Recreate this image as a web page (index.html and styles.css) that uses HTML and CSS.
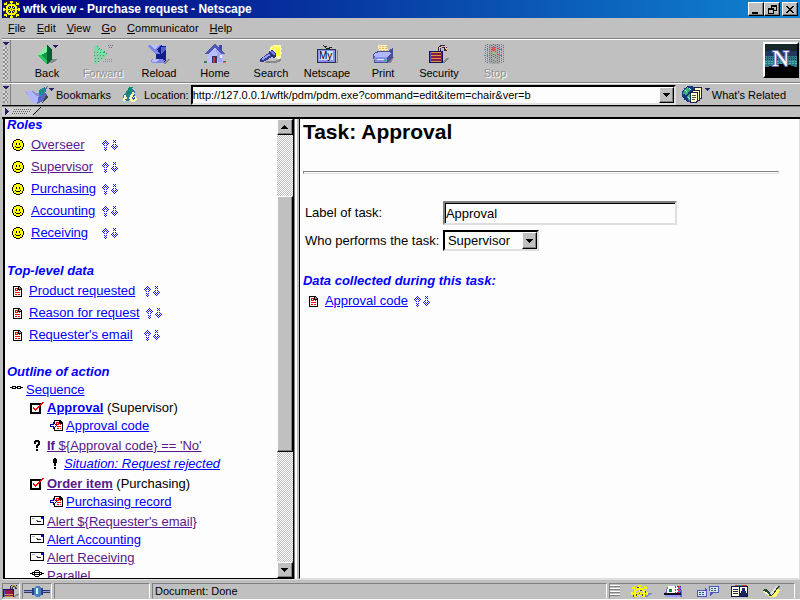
FILE: index.html
```html
<!DOCTYPE html>
<html lang="en">
<head>
<meta charset="utf-8">
<title>wftk view - Purchase request - Netscape</title>
<link rel="stylesheet" href="styles.css">
</head>
<body>
<svg class="defs" aria-hidden="true">
  <symbol id="wheel" viewBox="0 0 17 17">
    <path d="M5 3h7v1h1v1h1v7h-1v1h-1v1H5v-1H4v-1H3V5h1V4h1zM6 5v1H5v5h1v1h5v-1h1V6h-1V5z" fill="#ff0" fill-rule="evenodd"/>
    <path d="M8 0h1v17H8zM0 8h17v1H0z" fill="#ff0"/>
    <path d="M7 0h3v2H7zM7 15h3v2H7zM0 7h2v3H0zM15 7h2v3h-2zM1 2h2V1h1v3H1zM13 1h1v1h2v2h-3zM1 13h3v3H3v-1H1zM13 13h3v2h-2v1h-1z" fill="#ff0"/>
    <path d="M4 4h1v1H4zM12 4h1v1h-1zM4 12h1v1H4zM12 12h1v1h-1zM6 6h1v1H6zM10 6h1v1h-1zM6 10h1v1H6zM10 10h1v1h-1zM7 7h3v3H7z" fill="#ee0"/>
    <path d="M8 8h1v1H8zM6 2h2v1H6zM10 14h2v1h-2zM14 6h1v2h-1zM2 10h1v2H2zM9 5h2v1H9zM5 9h1v2H5zM11 9h1v2h-1z" fill="#442"/>
  </symbol>
  <symbol id="smile" viewBox="0 0 12 12">
    <path d="M4 0h4v1h2v1h1v2h1v4h-1v2h-1v1H8v1H4v-1H2v-1H1V8H0V4h1V2h1V1h2z" fill="#000"/>
    <path d="M4 1h4v1h2v2h1v4h-1v2H8v1H4v-1H2V8H1V4h1V2h2z" fill="#ff0"/>
    <path d="M4 4h1v2H4zM7 4h1v2H7zM3 7h1v1h4V7h1v1H8v1H4V8H3z" fill="#000"/>
  </symbol>
  <symbol id="arrows" viewBox="0 0 16 11">
    <path d="M3 .5h1M2 1.500h1m1 0h1M1 2.500h1m1 0h1m1 0h1M0 3.500h1m1 0h1m1 0h1m1 0h1M1 4.500h1m3 0h1M2 5.500h1m1 0h1M2 7.500h1m1 0h1M2 9.500h1m1 0h1M3 8.500h1m-1 2h1M11 .5h1m1 0h1M12 1.500h1M11 2.500h1m1 0h1M11 4.500h1m1 0h1M10 5.500h1m3 0h1M9 6.500h1m1 0h1m1 0h1m1 0h1M10 7.500h1m1 0h1m1 0h1M11 8.500h1m1 0h1M12 9.500h1" stroke="#1818e8"/>
  </symbol>
  <symbol id="page" viewBox="0 0 9 11">
    <path d="M0 0h6l3 3v8H0z" fill="#000"/><path d="M1 1h4v3h3v6H1z" fill="#fff"/>
    <path d="M6 1h1v1h1v1H6z" fill="#999"/>
    <path d="M2 2h3v3H2zM6 4h1v1H6zM2 6h5v1H2zM2 8h2v1H2zM5 8h2v1H5z" fill="#f00"/><path d="M3 3h1v1H3z" fill="#fff"/>
  </symbol>
  <symbol id="pagein" viewBox="0 0 13 11">
    <path d="M4 0h6l3 3v8H4z" fill="#000"/><path d="M5 1h4v3h3v6H5z" fill="#fff"/>
    <path d="M6 2h3v3H6zM10 4h1v1h-1zM7 6h4v1H7zM7 8h2v1H7zM10 8h1v1h-1z" fill="#f00"/><path d="M7 3h1v1H7z" fill="#fff"/>
    <path d="M0 4h3V2h1v1h1v1h1v1h1v1H6v1H5v1H4v1H3V7H0z" fill="#00a"/><path d="M1 5h3V4h1v1h1v1H5v1H4V6H1z" fill="#fff"/>
  </symbol>
  <symbol id="chain" viewBox="0 0 13 4">
    <path d="M0 1h2V0h4v1h1V0h4v1h2v1h-2v1H7V2H6v1H2V2H0z" fill="#000"/><path d="M3 1h2v1H3zM8 1h2v1H8z" fill="#fff"/>
  </symbol>
  <symbol id="task" viewBox="0 0 14 12">
    <path d="M0 1h11v11H0z" fill="#000"/><path d="M2 3h7v7H2z" fill="#fff"/>
    <path d="M3 5h1v1h1v1h1v1-2h1V5h1V4h1V3h1V2h1V1h1V0h2v1h-1v1h-1v1h-1v1h-1v1H9v1H8v1H7v1H6v1H5V8H4V7H3z" fill="#f00"/>
  </symbol>
  <symbol id="question" viewBox="0 0 7 12">
    <path d="M1 0h4v1h1v4H5v1H4v2H2V5h1V4h1V2H2v2H0V1h1zM2 9h2v2H2z" fill="#000"/>
  </symbol>
  <symbol id="bang" viewBox="0 0 4 12">
    <path d="M1 0h2v1h1v4H3v3H1V5H0V1h1zM1 9h2v2H1z" fill="#000"/>
  </symbol>
  <symbol id="mail" viewBox="0 0 14 9">
    <path d="M0 0h14v9H0z" fill="#000"/><path d="M1 1h12v7H1z" fill="#fff"/>
    <path d="M2 2h3v1H2z" fill="#aaa"/><path d="M11 1h2v2h-2z" fill="#00f"/><path d="M6 4h2v1H6z" fill="#888"/><path d="M7 5h4v1H7z" fill="#222"/>
  </symbol>
  <symbol id="parallel" viewBox="0 0 14 7">
    <path d="M0 3h2V2h2V1h1V0h4v1h1v1h2v1h2v1h-2v1h-2v1H9v1H5V6H4V5H2V4H0z" fill="#000"/><path d="M5 1h4v1H5zM3 3h1v1H3zM5 3h4v1H5zM10 3h1v1h-1zM5 5h4v1H5z" fill="#fff"/>
  </symbol>
  <symbol id="drop" viewBox="0 0 7 4"><path d="M0 0h7v1H6v1H5v1H4v1H3V3H2V2H1V1H0z"/></symbol>
  <symbol id="rise" viewBox="0 0 7 4"><path d="M0 4h7V3H6V2H5V1H4V0H3v1H2v1H1v1H0z"/></symbol>
  <symbol id="openlock" viewBox="0 0 20 20">
    <path d="M13 18l5-4h2v1l-5 4h-2z" fill="#888"/>
    <path d="M0 7h14v12H0z" fill="#181060"/><path d="M1 8h12v10H1z" fill="#901848"/>
    <path d="M2 8h10v1H2zM2 11h10v1H2zM2 14h10v1H2zM2 17h10v1H2z" fill="#c8a040"/>
    <path d="M1 8h1v10H1z" fill="#5058c0"/>
    <path d="M9 7V3h1V2h1V1h5v1h1v1h1v4h-3V4h-3v3z" fill="#302848"/><path d="M10 7V3h2V2h4v2h1v2" fill="none" stroke="#edc870"/>
  </symbol>
  <symbol id="grip" viewBox="0 0 6 4"><path d="M0 0h6v1H5v1H4v1H2V2H1V1H0z" fill="#226"/></symbol>
</svg>

<header class="titlebar">
  <svg class="emblem"><use href="#wheel"/></svg>
  <h1>wftk view - Purchase request - Netscape</h1>
  <div class="winbtns">
    <button class="raised" aria-label="Minimize"><svg width="9" height="9"><path d="M0 7h6v2H0z"/></svg></button>
    <button class="raised" aria-label="Restore"><svg width="9" height="9"><path d="M3 0h6v6H6V5h2V2H4v1H3zM0 3h6v6H0zM1 5v3h4V5z" fill-rule="evenodd"/></svg></button>
    <button class="raised close" aria-label="Close"><svg width="9" height="9"><path d="M0 1h2v1h1v1h2V2h1V1h2v1H7v1H6v1H5v1h1v1h1v1h1v1H6V7H5V6H3v1H2v1H0V7h1V6h1V5h1V4H2V3H1V2H0z"/></svg></button>
  </div>
</header>

<nav class="menubar">
  <button><u>F</u>ile</button><button><u>E</u>dit</button><button><u>V</u>iew</button><button><u>G</u>o</button><button><u>C</u>ommunicator</button><button><u>H</u>elp</button>
</nav>

<div class="toolbar">
  <span class="handle"><svg width="6" height="4"><use href="#grip"/></svg></span>
  <div class="tools">
    <button><svg width="24" height="20"><path d="M10 17l7-2h5l-2 3-8 2z" fill="#888"/><path d="M2 11L12 1v19z" fill="#28c860"/><path d="M2 11L12 1v9z" fill="#80f0a0"/><path d="M12 1l5 5v9l-5 5z" fill="#006030"/><path d="M6 11l6-3v8z" fill="#109848"/><use href="#grip" x="18" y="1" width="5" height="4"/></svg>Back</button>
    <button disabled><svg width="24" height="20"><path d="M3 3l2-2 12 10-12 9H3z" fill="#90d0a8"/><path d="M5 1l12 10H8z" fill="#68e8a0"/><path d="M6 2l11 9M3 8h10M3 11h12M4 14h9M4 17h5M7 5h4" stroke="#50907b" stroke-dasharray="1 2"/><path d="M12 17h9M14 15h8" stroke="#888" stroke-dasharray="1 1"/><path d="M17 1h5M18 3h3" stroke="#668" stroke-dasharray="1 1"/></svg>Forward</button>
    <button><svg width="24" height="20"><path d="M14 18l8-3 1 1-5 4z" fill="#888"/><path d="M10 1l9 1v15l-5 2H9z" fill="#101c90"/><path d="M2 1h12l-4 4 3 5H8L1 3z" fill="#7a84e4"/><path d="M3 1h10L8 5z" fill="#b8c0ff"/><path d="M5 15h8l5 1-3 3H5l-1-2z" fill="#8088e8"/><path d="M6 15h6l-2 3H5z" fill="#b8c0ff"/><path d="M14 3h5v2l-5 6z" fill="#5660d0"/></svg>Reload</button>
    <button><svg width="24" height="20"><path d="M1 19h22v-2H1z" fill="#388060"/><path d="M17 18h6v1h-6z" fill="#e64"/><path d="M4 9l8-8 8 8v10H4z" fill="#b8c0ff"/><path d="M1 10L12 0l10 10h-3l-7-6-7 6z" fill="#5058b8"/><path d="M16 1h3v7l-3-3z" fill="#4048a8"/><path d="M13 5l6 5v8h-4z" fill="#a0a8f0"/><path d="M9 12h5v7H9z" fill="#336"/><path d="M10 13h2v6h-2z" fill="#b23c50"/><path d="M17 11h2v3h-2z" fill="#eef"/></svg>Home</button>
    <button><svg width="24" height="20"><path d="M12 2l3-1h7v13l-2 1-8-2-2-5z" fill="#ffffa0"/><path d="M14 3h7M13 5h10M13 7h9M13 9h10M16 11h6" stroke="#ff3" stroke-width="2" stroke-dasharray="2 1"/><path d="M7 17h8l7-2v2l-6 2H6z" fill="#888"/><path d="M1 15l10-7 4 4-11 6H1z" fill="#303890"/><path d="M2 15l9-6 2 1-9 6z" fill="#929df4"/><path d="M10 7l3-1 4 3v3l-2 2-5-4z" fill="#283080"/><path d="M11 7h2l3 3v1h-2z" fill="#7880e0"/></svg>Search</button>
    <button><svg width="24" height="20"><path d="M4 18h18V6h1v13H5z" fill="#888"/><path d="M2 5h19v14H2z" fill="#235"/><path d="M3 6h17v12H3z" fill="#8890e8"/><path d="M4 7h14v9H4z" fill="#d9ddff"/><path d="M8 1l4 4 5-2M9 2h3" stroke="#222" fill="none"/><text x="4" y="15" class="my">My</text></svg>Netscape</button>
    <button><svg width="24" height="20"><path d="M10 18l10-5h3l-3 6z" fill="#888"/><path d="M7 1h9l1 8H8z" fill="#fff3bd"/><path d="M8 2h8M8 4h8M9 6h8" stroke="#eab964" stroke-dasharray="2 1"/><path d="M2 10l5-3h10l5-3v9l-6 6H3z" fill="#485098"/><path d="M3 10l5-2h9l3 1-4 4H4z" fill="#b1b8ff"/><path d="M3 13h13v5H4z" fill="#8890e0"/><path d="M6 15h7v1H6z" fill="#dfe2ff"/><path d="M13 16h2v1h-2z" fill="#0c4"/></svg>Print</button>
    <button><svg width="24" height="20"><use href="#openlock" x="2" width="20" height="20"/></svg>Security</button>
    <button disabled><svg width="24" height="20"><path d="M6 0h11v20H6z" fill="#aaa"/><path d="M2 1v18M4 0v20M6 1v18M16 1v18M18 0v20M20 1v18M8 1v18M10 0v20M12 1v18M14 0v20" stroke="#668" stroke-dasharray="1 1"/><path d="M1 5h4M1 11h4M17 5h4M17 11h4" stroke="#58c" stroke-dasharray="2 1"/><path d="M9 3h3v4H9z" fill="#d55"/><path d="M10 9h3M10 15h3" stroke="#9b8" stroke-width="2"/><path d="M15 4h1M15 10h1" stroke="#d44"/></svg>Stop</button>
  </div>
  <a class="logo" href="#" aria-label="Netscape"><svg width="32" height="32"><path d="M0 0h32v32H0z" fill="#182828"/><path d="M0 7h32v6H0z" fill="#20385c"/><path d="M0 12h32v12H0z" fill="#307888"/><path d="M0 9h32M0 11h32M0 13h32M0 15h32" stroke="#203c58" stroke-dasharray="1 1"/><path d="M0 17h32M0 19h32" stroke="#55b2b4" stroke-dasharray="2 1"/><path d="M0 32V23h4v-1h4v-1h5v-1h8v1h5v1h3v1h3v9z" fill="#000"/><text x="7" y="22" class="bign">N</text></svg></a>
</div>

<form class="location">
  <span class="handle"><svg width="6" height="4"><use href="#grip"/></svg></span>
  <button type="button" class="flatbtn bookmarks"><svg width="30" height="18"><path d="M1 5h7l2 2h5v10H8L2 8z" fill="#888eda"/><path d="M1 5l6 12h8l5-6-9-1-5-5z" fill="#afb6ff"/><path d="M15 5l8-5-3 7 2 1-4 7-6 3z" fill="#5864c8"/><path d="M14 4l6-3v4l-5 5z" fill="#199080"/><path d="M21 9l2 2-6 6z" fill="#444"/><use href="#grip" x="24" y="2" width="5" height="4"/></svg>Bookmarks</button>
  <span class="drag"><svg width="16" height="16"><path d="M1 9l6-8 4 1 2 3-6 9H1z" fill="#257e91"/><path d="M7 0h4l-5 8H4z" fill="#078a79"/><path d="M1 12l2-5 2 4-1 3H1zM7 11l4-7 4 8-2 3H9z" fill="#ffffb0"/><path d="M3 12h2M10 12l3-5M11 13l2-3" stroke="#3455b8"/></svg></span>
  <label for="url">Location:</label>
  <div class="sunken combo"><input id="url" value="http://127.0.0.1/wftk/pdm/pdm.exe?command=edit&amp;item=chair&amp;ver=b"><button type="button" class="raised" aria-label="Show addresses"><svg width="7" height="4"><use href="#drop"/></svg></button></div>
  <button type="button" class="flatbtn related"><svg width="28" height="18"><circle cx="8" cy="8" r="8" fill="#173880"/><path d="M2 4l4-3 2 3-3 5-4-1zM7 8l3-1v6l-3 2-2-4z" fill="#35ae82"/><path d="M3 4l2 2M6 11l2 2M7 2l2 2" stroke="#9ff"/><path d="M12 1h8v12h-8z" fill="#224"/><path d="M13 2h6v10h-6z" fill="#ffffc8"/><path d="M10 4h8v11h-8z" fill="#224"/><path d="M11 5h6v9h-6z" fill="#ffffc8"/><path d="M8 6h8v9l-2 2H8z" fill="#224"/><path d="M9 7h6v7l-2 2H9z" fill="#ffffc8"/><path d="M10 9.500h4M10 11.500h4M10 13.500h3" stroke="#555"/><use href="#grip" x="23" y="2" width="5" height="4"/></svg>What's Related</button>
</form>

<div class="shelf"><svg width="40" height="9"><path d="M0 0h38l-9 9H0z" fill="#d0d0d0"/><path d="M39 0l-8 8" stroke="#000"/><path d="M3 1l4 3-4 4z" fill="#226"/><path d="M12 2.500h18M11 4.500h17M10 6.500h16" stroke="#666" stroke-dasharray="1 1"/></svg></div>

<main class="frames">
  <section class="frame outline">
    <div class="scroller">
      <div class="content">
        <h2>Roles</h2>
        <ul class="items roles">
          <li><svg class="icon" width="12" height="12"><use href="#smile"/></svg><a class="seen" href="#">Overseer</a><svg class="move" width="16" height="11"><use href="#arrows"/></svg></li>
          <li><svg class="icon" width="12" height="12"><use href="#smile"/></svg><a class="seen" href="#">Supervisor</a><svg class="move" width="16" height="11"><use href="#arrows"/></svg></li>
          <li><svg class="icon" width="12" height="12"><use href="#smile"/></svg><a href="#">Purchasing</a><svg class="move" width="16" height="11"><use href="#arrows"/></svg></li>
          <li><svg class="icon" width="12" height="12"><use href="#smile"/></svg><a href="#">Accounting</a><svg class="move" width="16" height="11"><use href="#arrows"/></svg></li>
          <li><svg class="icon" width="12" height="12"><use href="#smile"/></svg><a href="#">Receiving</a><svg class="move" width="16" height="11"><use href="#arrows"/></svg></li>
        </ul>
        <h2>Top-level data</h2>
        <ul class="items data">
          <li><svg class="icon" width="9" height="11"><use href="#page"/></svg><a href="#">Product requested</a><svg class="move" width="16" height="11"><use href="#arrows"/></svg></li>
          <li><svg class="icon" width="9" height="11"><use href="#page"/></svg><a href="#">Reason for request</a><svg class="move" width="16" height="11"><use href="#arrows"/></svg></li>
          <li><svg class="icon" width="9" height="11"><use href="#page"/></svg><a href="#">Requester's email</a><svg class="move" width="16" height="11"><use href="#arrows"/></svg></li>
        </ul>
        <h2>Outline of action</h2>
        <div class="tree">
          <p class="l0"><svg width="13" height="4"><use href="#chain"/></svg><a href="#">Sequence</a></p>
          <p class="l1"><svg width="14" height="12"><use href="#task"/></svg><span><a href="#"><b>Approval</b></a> (Supervisor)</span></p>
          <p class="l2"><svg width="13" height="11"><use href="#pagein"/></svg><a href="#">Approval code</a></p>
          <p class="l1 tall"><svg width="14" height="12"><use href="#question"/></svg><a class="seen" href="#"><b>If</b> ${Approval code} == 'No'</a></p>
          <p class="l2 note"><svg width="10" height="12"><use href="#bang"/></svg><a href="#"><i>Situation: Request rejected</i></a></p>
          <p class="l1 tall"><svg width="14" height="12"><use href="#task"/></svg><span><a class="seen" href="#"><b>Order item</b></a> (Purchasing)</span></p>
          <p class="l2"><svg width="13" height="11"><use href="#pagein"/></svg><a href="#">Purchasing record</a></p>
          <p class="l1 tall"><svg width="14" height="9"><use href="#mail"/></svg><a class="seen" href="#">Alert ${Requester's email}</a></p>
          <p class="l1"><svg width="14" height="9"><use href="#mail"/></svg><a href="#">Alert Accounting</a></p>
          <p class="l1"><svg width="14" height="9"><use href="#mail"/></svg><a class="seen" href="#">Alert Receiving</a></p>
          <p class="l1"><svg width="14" height="7"><use href="#parallel"/></svg><a class="seen" href="#">Parallel</a></p>
        </div>
      </div>
    </div>
    <div class="scrollbar">
      <button class="raised" aria-label="Scroll up"><svg width="7" height="4"><use href="#rise"/></svg></button>
      <div class="track"><div class="raised thumb"></div></div>
      <button class="raised" aria-label="Scroll down"><svg width="7" height="4"><use href="#drop"/></svg></button>
    </div>
  </section>
  <div class="splitter"></div>
  <section class="frame detail">
    <h2 class="heading">Task: Approval</h2>
    <hr>
    <form class="fields">
      <label for="name">Label of task:</label>
      <input id="name" value="Approval">
      <label for="who">Who performs the task:</label>
      <div class="pick"><select id="who" class="sunken"><option>Supervisor</option></select><span class="raised arrow"><svg width="7" height="4"><use href="#drop"/></svg></span></div>
    </form>
    <h2>Data collected during this task:</h2>
    <ul class="items collected">
      <li><svg class="icon" width="9" height="11"><use href="#page"/></svg><a href="#">Approval code</a><svg class="move" width="16" height="11"><use href="#arrows"/></svg></li>
    </ul>
  </section>
</main>

<footer class="status">
  <span class="panel lock"><svg width="16" height="14" viewBox="0 0 20 20" preserveAspectRatio="none"><use href="#openlock" width="20" height="20"/></svg></span>
  <span class="panel plug"><svg width="26" height="11"><path d="M0 5.500h26" stroke="#336" stroke-width="3"/><path d="M0 5.500h26" stroke="#89d"/><path d="M8 2h2v7H8zM17 2h2v7h-2z" fill="#248"/><path d="M10 2l2-2h3l2 2v7l-2 2h-3l-2-2z" fill="#4880c0"/><path d="M12 2h2v6h-2z" fill="#cff"/></svg></span>
  <span class="panel progress"></span>
  <span class="panel message">Document: Done</span>
  <nav class="panel components">
    <span class="ridges"></span>
    <button aria-label="Navigator"><svg width="22" height="12"><path d="M12 9l10-1-7 5h-4z" fill="#88c"/><use href="#wheel" width="17" height="17"/></svg></button>
    <button aria-label="Inbox"><svg width="22" height="12"><path d="M2 8L5 1h13l1 8v5H2z" fill="#6868d0"/><path d="M5 1h10v7H4z" fill="#fff"/><path d="M6 4h3v3H6z" fill="#083"/><path d="M12.500 1v7M15.500 1v7" stroke="#e22" stroke-dasharray="2 1"/><path d="M14 1v7M17 1v7" stroke="#22e" stroke-dasharray="1 2"/><path d="M1 8h17v2H1z" fill="#112"/><path d="M2 10h15v3H2z" fill="#99f"/></svg></button>
    <button aria-label="Newsgroups"><svg width="24" height="12"><path d="M1 5h8V3l2 2v7H1zM13 1h10v7h-6l-3 3z" fill="#5258b8"/><path d="M2 6h8v5H2zM14 2h8v5h-8z" fill="#dce1ff"/><path d="M3 7.500h6M3 9.500h5M15 3.500h6M15 5.500h5" stroke="#265" stroke-dasharray="2 1"/></svg></button>
    <button aria-label="Address Book"><svg width="20" height="12"><path d="M1 1h17v12H1z" fill="#115"/><path d="M2 2h7v9H2zM10 2h7v9h-7z" fill="#ffffe8"/><path d="M3 4.500h5M3 6.500h5M3 8.500h5" stroke="#226"/><path d="M12 3h3v3h1v2h1v3h-7V8h1V6h1z" fill="#226"/><path d="M5 0h12v1H5z" fill="#c33"/><path d="M8 0h4v1H8z" fill="#297"/></svg></button>
    <button aria-label="Composer"><svg width="22" height="12"><path d="M1 6l8 6h6l4-7-5-2-3 5z" fill="#ff6"/><path d="M1 5l4-1 5 5 6-8h3l-8 10H9z" fill="#243"/><path d="M9 9l6-8h2l-6 9z" fill="#ddd"/><path d="M3 6l5 4" stroke="#fff"/></svg></button>
  </nav>
</footer>
</body>
</html>
```
FILE: styles.css
```css
* { box-sizing: border-box; }

body {
  margin: 0;
  padding-left: 2px;
  height: 100vh;
  display: flex;
  flex-direction: column;
  overflow: hidden;
  background: #c0c0c0;
  color: #000;
  font: 11px/14px "Liberation Sans", Arial, sans-serif;
}

button, input, select { font: inherit; color: inherit; border-radius: 0; }
button { border: 0; padding: 0; background: none; }
svg { display: block; flex: none; shape-rendering: crispEdges; }
h1, h2, p, ul { margin: 0; padding: 0; }
ul { list-style: none; }
a { color: #00f; }
a.seen { color: #551a8b; }
.defs { position: absolute; width: 0; height: 0; }
.my { font: 10px "Liberation Sans", sans-serif; fill: #000; }
.bign { font: 24px "Liberation Serif", serif; fill: #fff; stroke: #6068b0; stroke-width: 2px; paint-order: stroke; }

.raised {
  display: flex;
  align-items: center;
  justify-content: center;
  background: #c0c0c0;
  border: 1px solid;
  border-color: #fff #000 #000 #fff;
  box-shadow: inset -1px -1px #808080;
}
.sunken {
  background: #fdfdfd;
  border: 2px solid;
  border-color: #000 #dfdfdf #dfdfdf #000;
}

/* Title bar */
.titlebar {
  flex: 0 0 18px;
  display: flex;
  align-items: center;
  padding: 0 2px 0 1px;
  background: linear-gradient(to right, #000080, #1084d0);
  color: #fff;
}
.emblem { width: 17px; height: 17px; background: #182048; }
.titlebar h1 { flex: 1; padding-left: 3px; font-size: 12px; line-height: 18px; }
.winbtns { display: flex; }
.winbtns .raised { width: 16px; height: 14px; }
.winbtns .close { margin-left: 2px; }

/* Menu */
.menubar {
  flex: 0 0 21px;
  display: flex;
  align-items: center;
  gap: 11px;
  padding-left: 6px;
  border-bottom: 1px solid #808080;
}

/* Toolbars */
.toolbar, .location {
  display: flex;
  border-top: 1px solid #fff;
  border-bottom: 1px solid #808080;
}
.toolbar { flex: 0 0 44px; }
.handle {
  flex: 0 0 9px;
  margin-right: 8px;
  padding: 2px 0 2px 1px;
  border-right: 1px solid #808080;
}
.handle::after {
  content: "";
  display: block;
  height: calc(100% - 5px);
  margin-top: 1px;
  width: 5px;
  background: repeating-conic-gradient(#888 0 25%, #ddd 0 50%) 0 0 / 4px 4px;
}
.tools { flex: 1; display: flex; }
.tools button {
  width: 56px;
  display: flex;
  flex-direction: column;
  align-items: center;
  padding-top: 4px;
  gap: 2px;
}
.tools button:disabled { color: #909090; text-shadow: 1px 1px #fff; }
.logo {
  align-self: flex-start;
  margin: 2px 1px 0 0;
  border: 2px solid;
  border-color: #fff #000 #000 #fff;
}

.location { flex: 0 0 23px; align-items: center; border-bottom-color: #000; }
.location .handle { align-self: stretch; margin-right: 14px; }
.flatbtn { display: flex; align-items: center; gap: 1px; }
.drag { margin: 0 6px 0 11px; }
.combo { flex: 1; display: flex; height: 20px; margin-left: 2px; }
.combo input { flex: 1; min-width: 0; border: 0; padding: 0; background: none; outline: 0; }
.combo .raised { width: 15px; }
.related { margin: 0 14px 0 6px; gap: 2px; }

.shelf {
  flex: 0 0 13px;
  border-top: 1px solid #808080;
  border-bottom: 2px solid #000;
}

/* Frames */
.frames {
  flex: 1;
  min-height: 0;
  margin-left: 1px;
  display: grid;
  grid-template-columns: 36.5% 5px 1fr;
  font-size: 13px;
  line-height: 18px;
}
.frame {
  min-width: 0;
  min-height: 0;
  overflow: hidden;
  background: #fdfdfd;
  border-left: 2px solid #000;
  border-bottom: 1px solid #000;
}
.outline { display: flex; border-right: 1px solid #000; }
.scroller { flex: 1; overflow: hidden; }
.content { margin-top: -4px; padding-left: 2px; }
.splitter { background: linear-gradient(to right, #808080 1px, #fff 1px 3px, #c0c0c0 3px); }
.frame h2 { color: #00f; font-size: 13px; font-style: italic; line-height: 19px; }

.items { padding-bottom: 17px; }
.items li { display: flex; align-items: center; height: 22px; }
.items .icon { margin-right: 7px; }
.roles { padding-left: 5px; }
.data { padding: 0 0 16px 6px; }
.roles a { min-width: 65px; }
.data a { min-width: 109px; }
.items .move { margin-left: 6px; }

.tree p { display: flex; height: 18px; }
.tree svg { margin: 3px 3px 0 0; }
.tree .tall { height: 20px; padding-top: 2px; }
.tree .note svg { margin-right: 4px; }
.tree .l0 { padding-left: 3px; }
.tree .l0 svg { margin-top: 5px; }
.tree .l1 { padding-left: 23px; }
.tree .l2 { padding-left: 43px; }

.scrollbar { flex: 0 0 16px; display: flex; flex-direction: column; }
.scrollbar button { flex: 0 0 16px; }
.track {
  flex: 1;
  padding-top: 61px;
  background: repeating-conic-gradient(#c0c0c0 0 25%, #fff 0 50%) 0 0 / 2px 2px;
}
.thumb { height: 70%; }

/* Task form */
.detail { padding: 0 20px 0 3px; border-left-width: 1px; border-bottom-color: #dfdfdf; border-right: 1px solid #dfdfdf; }
.detail .heading { color: #000; font-size: 21px; font-style: normal; line-height: 26px; }
.detail hr { margin: 26px 0 27px; border: 1px solid; border-color: #808080 #dfdfdf #dfdfdf #808080; height: 3px; }
.fields {
  display: grid;
  grid-template-columns: 138px 1fr;
  align-items: center;
  row-gap: 5px;
  padding-left: 2px;
  margin-bottom: 20px;
}
.fields input {
  width: 234px;
  height: 24px;
  padding: 0 1px;
  border: 2px solid;
  border-color: #808080 #dfdfdf #dfdfdf #808080;
  background: #fdfdfd;
  box-shadow: inset 1px 1px #000;
}
.pick { position: relative; width: 96px; height: 21px; }
.pick select { appearance: none; width: 100%; height: 100%; padding: 0 3px; }
.pick .arrow { position: absolute; top: 2px; right: 2px; bottom: 2px; width: 15px; pointer-events: none; }
.collected { padding-left: 6px; }

/* Status bar */
.status {
  flex: 0 0 21px;
  display: flex;
  gap: 2px;
  padding: 3px 5px 0 0;
  border-top: 1px solid #dfdfdf;
  border-bottom: 1px solid #fff;
}
.panel {
  display: flex;
  align-items: center;
  border: 1px solid;
  border-color: #808080 #fff #c0c0c0 #808080;
}
.lock { flex: 0 0 18px; }
.plug { flex: 0 0 30px; justify-content: center; }
.progress { flex: 0 0 96px; }
.message { flex: 1; padding-left: 2px; }
.components { flex: 0 0 186px; justify-content: space-between; padding-right: 11px; }
.ridges { width: 10px; height: 12px; background: repeating-linear-gradient(#fff 0 1px, #808080 1px 2px, #c0c0c0 2px 3px); }
```
